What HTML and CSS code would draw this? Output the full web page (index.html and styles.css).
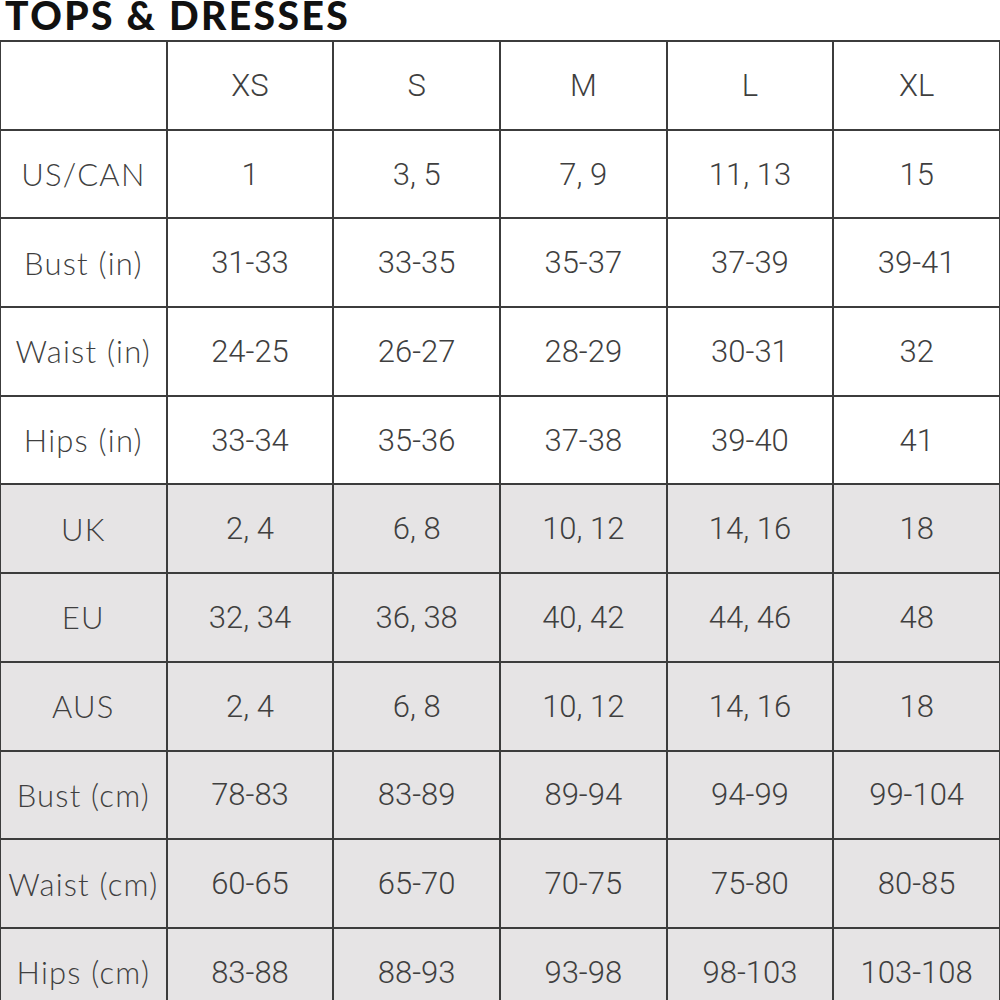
FILE: index.html
```html
<!DOCTYPE html>
<html>
<head>
<meta charset="utf-8">
<link rel="stylesheet" href="styles.css">
</head>
<body>
<h1 class="title">TOPS &amp; DRESSES</h1>
<table class="chart">
  <tr><td class="label"></td><td>XS</td><td>S</td><td>M</td><td>L</td><td>XL</td></tr>
  <tr><td class="label">US/CAN</td><td>1</td><td>3, 5</td><td>7, 9</td><td>11, 13</td><td>15</td></tr>
  <tr><td class="label">Bust (in)</td><td>31-33</td><td>33-35</td><td>35-37</td><td>37-39</td><td>39-41</td></tr>
  <tr><td class="label">Waist (in)</td><td>24-25</td><td>26-27</td><td>28-29</td><td>30-31</td><td>32</td></tr>
  <tr><td class="label">Hips (in)</td><td>33-34</td><td>35-36</td><td>37-38</td><td>39-40</td><td>41</td></tr>
  <tr class="alt"><td class="label">UK</td><td>2, 4</td><td>6, 8</td><td>10, 12</td><td>14, 16</td><td>18</td></tr>
  <tr class="alt"><td class="label">EU</td><td>32, 34</td><td>36, 38</td><td>40, 42</td><td>44, 46</td><td>48</td></tr>
  <tr class="alt"><td class="label">AUS</td><td>2, 4</td><td>6, 8</td><td>10, 12</td><td>14, 16</td><td>18</td></tr>
  <tr class="alt"><td class="label">Bust (cm)</td><td>78-83</td><td>83-89</td><td>89-94</td><td>94-99</td><td>99-104</td></tr>
  <tr class="alt"><td class="label">Waist (cm)</td><td>60-65</td><td>65-70</td><td>70-75</td><td>75-80</td><td>80-85</td></tr>
  <tr class="alt"><td class="label">Hips (cm)</td><td>83-88</td><td>88-93</td><td>93-98</td><td>98-103</td><td>103-108</td></tr>
</table>
</body>
</html>
```
FILE: styles.css
```css
html, body {
  margin: 0;
  padding: 0;
  background: #ffffff;
  overflow: hidden;
}
body {
  width: 1000px;
  height: 1000px;
  font-family: "Lato", "Liberation Sans", sans-serif;
}
.title {
  margin: 0;
  padding-left: 5px;
  height: 40px;
  font-size: 39px;
  line-height: 31px;
  font-weight: 900;
  color: #111;
  letter-spacing: 2.4px;
  white-space: nowrap;
}
.chart {
  width: 1002px;
  margin-left: -1px;
  border-collapse: collapse;
  table-layout: fixed;
}
.chart td {
  height: 86.7px;
  padding: 0;
  border: 2px solid #3c3c3c;
  text-align: center;
  vertical-align: middle;
  font-family: "Roboto", "Liberation Sans", sans-serif;
  font-weight: 300;
  font-size: 31px;
  color: #3f3f3f;
  white-space: nowrap;
}
.chart td.label {
  font-family: "Lato", "Liberation Sans", sans-serif;
  font-weight: 300;
  letter-spacing: 1.2px;
  color: #3f3f3f;
}
.chart tr.alt td {
  background: #e6e4e5;
}
```
